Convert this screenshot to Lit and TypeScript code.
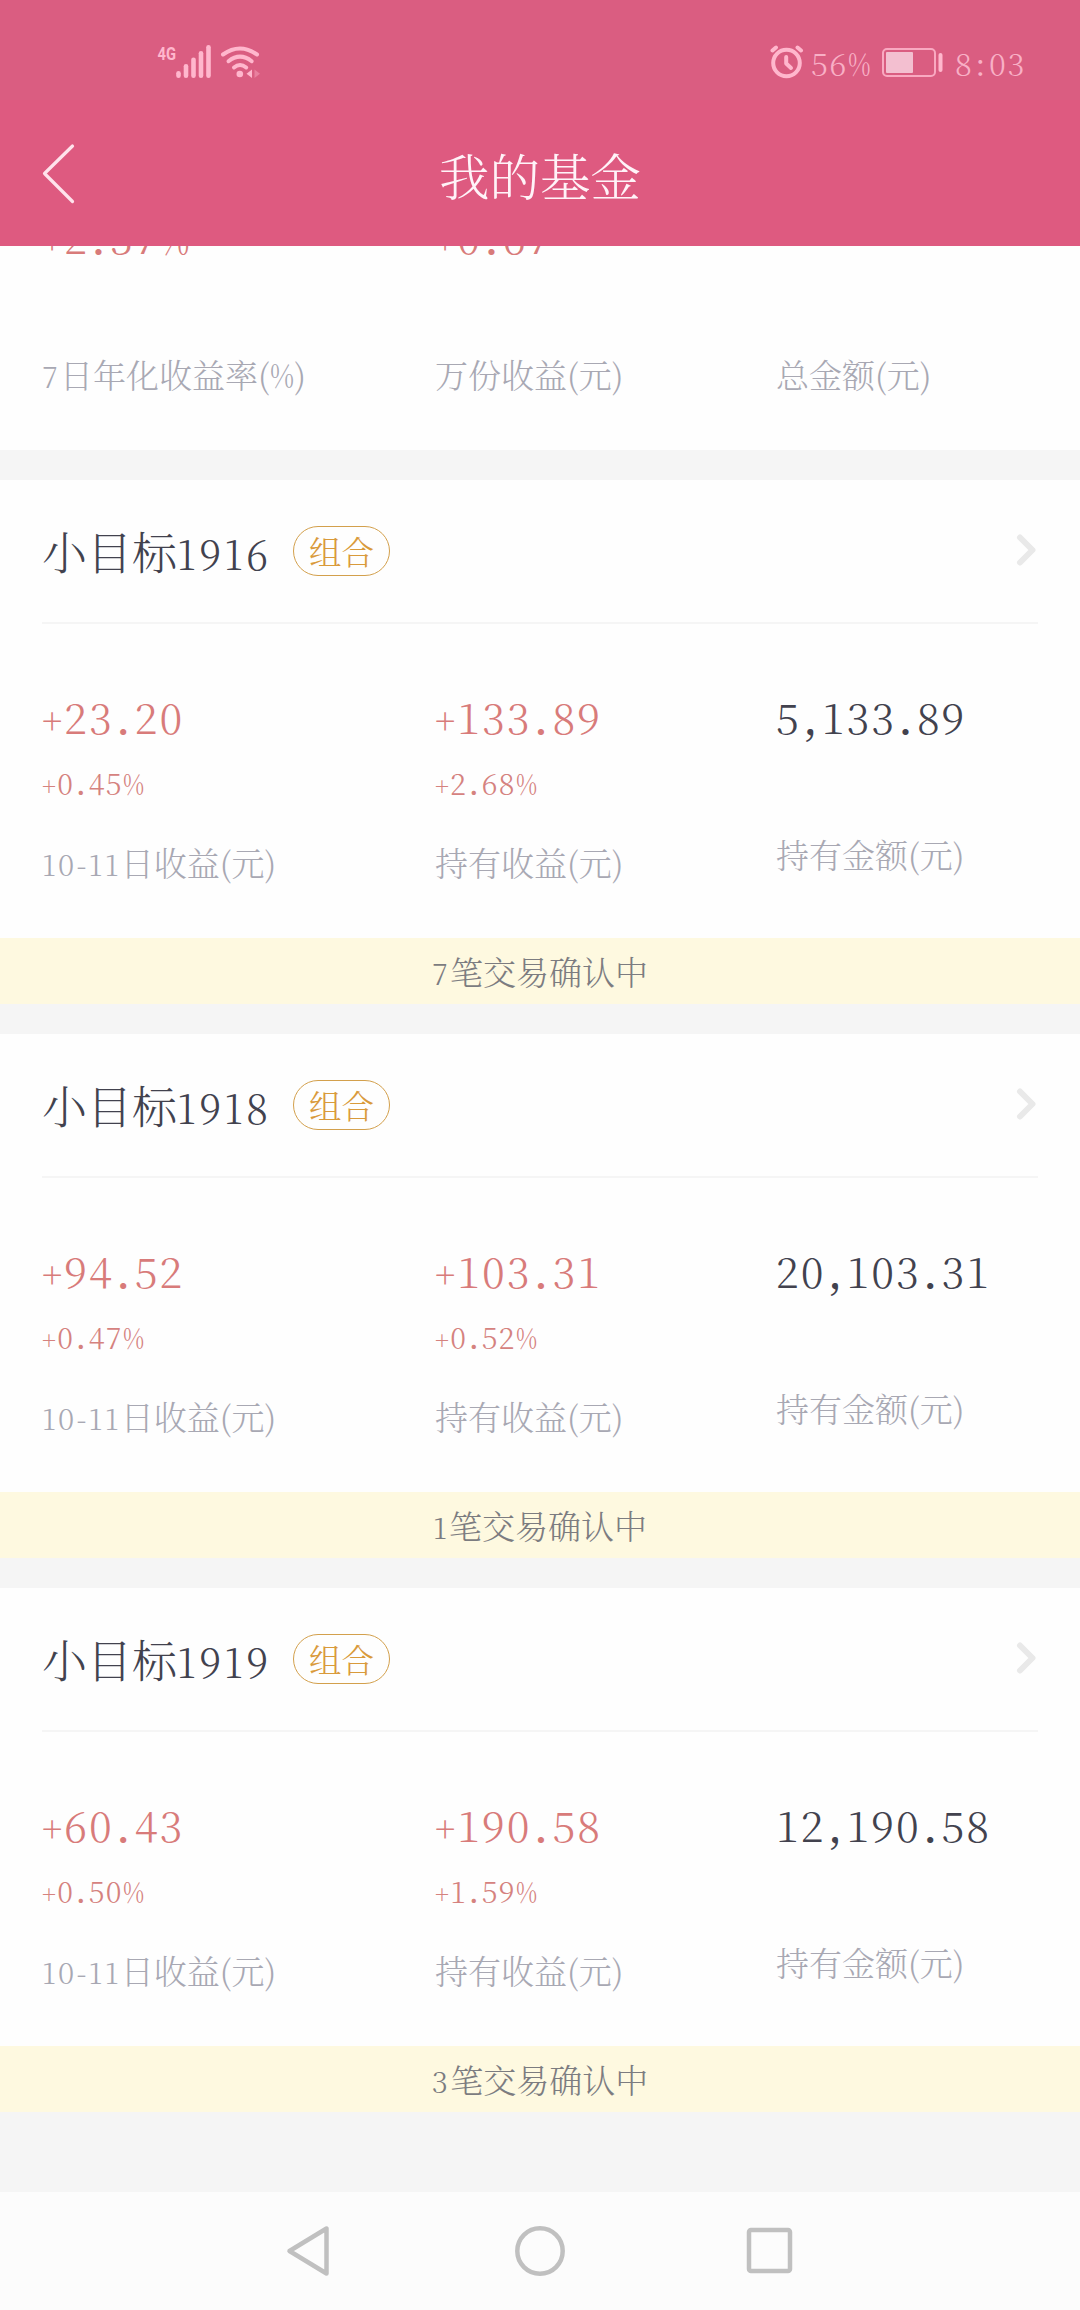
import { LitElement, html, css, svg } from "lit";
import { customElement, property } from "lit/decorators.js";

interface Fund {
  name: string;
  tag: string;
  day: string;
  dayRate: string;
  held: string;
  heldRate: string;
  amount: string;
  notice: string;
}

const FUNDS: Fund[] = [
  { name: "小目标1916", tag: "组合", day: "+23.20", dayRate: "+0.45%", held: "+133.89", heldRate: "+2.68%", amount: "5,133.89", notice: "7笔交易确认中" },
  { name: "小目标1918", tag: "组合", day: "+94.52", dayRate: "+0.47%", held: "+103.31", heldRate: "+0.52%", amount: "20,103.31", notice: "1笔交易确认中" },
  { name: "小目标1919", tag: "组合", day: "+60.43", dayRate: "+0.50%", held: "+190.58", heldRate: "+1.59%", amount: "12,190.58", notice: "3笔交易确认中" },
];

const MARK: Record<string, string> = { "+": "plus", "%": "pct", ".": "dot", ",": "dot", ":": "dot" };

/* Gives signs and separators their own widths next to the digits. */
const figures = (text: string) =>
  text.split(/([+%.,:])/).filter(Boolean).map((p) => (MARK[p] ? html`<span class=${MARK[p]}>${p}</span>` : p));

/* Sets digits a little smaller and wider than the Chinese text around them. */
const mixed = (text: string) =>
  text.split(/([\d-]+|%)/).filter(Boolean).map((p) =>
    p === "%" ? html`<span class="pct">${p}</span>` : /\d/.test(p) ? html`<span class="num">${p}</span>` : p
  );

const figureStyles = css`
  .plus { font-size: 0.84em; line-height: 0; }
  .pct { display: inline-block; width: 0.74em; transform: scaleX(0.8); transform-origin: 0 100%; }
  .dot { padding: 0 0.06em; font-weight: 600; }
  .num { font-size: 0.89em; line-height: 0; letter-spacing: 0.075em; }
`;

const typeStyles = css`
  :host {
    display: block;
    font-family: "Noto Serif CJK SC", "Liberation Serif", "Noto Sans CJK SC", serif;
    font-weight: 300;
  }
`;

@customElement("status-bar")
export class StatusBar extends LitElement {
  static styles = [
    typeStyles,
    figureStyles,
    css`
      .bar {
        box-sizing: border-box;
        height: 100px;
        padding: 42px 51px 0 156px;
        display: flex;
        align-items: flex-start;
        background: #da5d81;
        color: #f8b0c6;
      }
      svg { display: block; flex: none; margin-top: -2px; }
      .net { margin-right: auto; }
      .text { margin-top: -1px; font-size: 31px; line-height: 44px; letter-spacing: 1.7px; white-space: nowrap; }
      .power { width: 62px; margin-left: 7px; }
      .battery { margin-left: 8px; }
      .time { width: 74px; margin-left: 11px; }
      .dot { font-weight: 400; }
    `,
  ];
  render() {
    const bars = [71, 64, 57.5, 51, 45];
    return html`<div class="bar">
      <svg class="net" width="110" height="42" viewBox="156 40 110 42" fill="none" stroke="#ffb7cd" stroke-linecap="round">
        <text x="157.5" y="60" font-family="Roboto, sans-serif" font-size="19" font-weight="700" textLength="18.5" lengthAdjust="spacingAndGlyphs" fill="#ffb7cd" stroke="none">4G</text>
        ${bars.map((top, i) => svg`<path stroke-width="4.6" d=${`M${178.5 + i * 7.5} ${top + 2.3}V75.7`} />`)}
        <g stroke-width="4">
          <path d="M223 54.5Q239.8 42.5 257 54.5" />
          <path d="M228.500 61.200Q240 52 251.700 61.200" />
          <path d="M234 67.500Q240 62.500 246.200 67.500" />
        </g>
        <circle cx="239.800" cy="74" r="3.300" fill="#ffb7cd" stroke="none" />
        <path d="M252 69.500V78L246.500 73.800Z" fill="#ffb7cd" stroke="none" />
        <path d="M254.500 69.500V78L260 73.800Z" fill="#ffb7cd" opacity=".4" stroke="none" />
      </svg>
      <svg width="34" height="42" viewBox="771 40 34 42" fill="none" stroke="#ffb7cd" stroke-width="4" stroke-linecap="round">
        <circle cx="787.500" cy="63" r="13.300" />
        <path d="M787.200 57V63.500L792 68" stroke-linejoin="round" />
        <path d="M773.500 50.500L777 47.500M798.500 47.500L802 50.500" />
      </svg>
      <div class="text power">${figures("56%")}</div>
      <svg class="battery" width="63" height="42" viewBox="882 40 63 42" fill="none">
        <rect x="884" y="49" width="52" height="27" rx="4" stroke="#f9a9c1" stroke-width="2" />
        <rect x="887" y="52" width="27" height="21" rx="1" fill="#f3bfd0" />
        <rect x="939.500" y="53" width="4" height="19" rx="2" fill="#ffb7cd" />
      </svg>
      <div class="text time">${figures("8:03")}</div>
    </div>`;
  }
}

@customElement("title-bar")
export class TitleBar extends LitElement {
  static styles = [
    typeStyles,
    css`
      .bar {
        box-sizing: border-box;
        height: 146px;
        padding: 0 42px;
        display: grid;
        grid-template-columns: 40px 1fr 40px;
        align-items: center;
        background: #de5a80;
        color: #fff3f8;
      }
      svg { display: block; }
      .title { padding-top: 2px; text-align: center; font-size: 50.500px; line-height: 60px; }
    `,
  ];
  render() {
    return html`<div class="bar">
      <svg width="40" height="64" viewBox="42 141 40 64" fill="none" stroke="#ffe3ec" stroke-width="3.200" stroke-linecap="round" stroke-linejoin="round">
        <path d="M72.500 146L44.500 173.500L72.500 201.500" />
      </svg>
      <div class="title">我的基金</div>
    </div>`;
  }
}

const metricStyles = css`
  .metrics { display: grid; grid-template-columns: 393px 341px 1fr; padding-left: 42px; }
  .value { height: 50px; font-size: 42px; line-height: 46px; letter-spacing: 2px; color: #d87b7a; white-space: nowrap; }
  .rate { margin-top: 21px; height: 40px; font-size: 29px; line-height: 38px; letter-spacing: 1.300px; color: #d5827f; white-space: nowrap; }
  .label { margin-top: 36px; font-size: 33px; line-height: 44px; color: #a8a8b3; white-space: nowrap; }
  .total { color: #42424e; }
  .total + .label { margin-top: 89px; }
`;

@customElement("fund-card")
export class FundCard extends LitElement {
  static styles = [
    typeStyles,
    figureStyles,
    metricStyles,
    css`
      .card { height: 524px; display: flex; flex-direction: column; background: #fefefe; }
      .head {
        box-sizing: border-box;
        height: 144px;
        margin: 0 42px;
        display: flex;
        align-items: center;
        border-bottom: 2px solid #f5f5f5;
      }
      .name { width: 227px; font-size: 45px; line-height: 64px; white-space: nowrap; color: #42424e; }
      .tag {
        box-sizing: border-box;
        width: 97px;
        height: 50px;
        margin-left: 24px;
        border: 1.500px solid #d3a04c;
        border-radius: 25px;
        text-align: center;
        font-size: 32.500px;
        line-height: 48px;
        color: #d99a3b;
      }
      .arrow { display: block; margin: -3px 0 0 auto; }
      .metrics { flex: 1; padding-top: 69px; align-items: start; }
      .notice { height: 66px; background: #fef9e0; text-align: center; font-size: 33px; line-height: 65px; color: #7c7c80; }
    `,
  ];
  @property({ attribute: false }) fund!: Fund;
  render() {
    const f = this.fund;
    return html`<section class="card">
      <div class="head">
        <div class="name">${mixed(f.name)}</div>
        <div class="tag">${f.tag}</div>
        <svg class="arrow" width="22" height="34" viewBox="0 0 22 34" fill="none" stroke="#e9e9e9" stroke-width="6" stroke-linecap="round" stroke-linejoin="round">
          <path d="M4 4.500L16.500 17L4 29.500" />
        </svg>
      </div>
      <div class="metrics">
        <div>
          <div class="value">${figures(f.day)}</div>
          <div class="rate">${figures(f.dayRate)}</div>
          <div class="label">${mixed("10-11日收益(元)")}</div>
        </div>
        <div>
          <div class="value">${figures(f.held)}</div>
          <div class="rate">${figures(f.heldRate)}</div>
          <div class="label">持有收益(元)</div>
        </div>
        <div>
          <div class="value total">${figures(f.amount)}</div>
          <div class="label">持有金额(元)</div>
        </div>
      </div>
      <div class="notice">${mixed(f.notice)}</div>
    </section>`;
  }
}

@customElement("app-root")
export class AppRoot extends LitElement {
  static styles = [
    typeStyles,
    figureStyles,
    metricStyles,
    css`
      .page { width: 1080px; height: 2310px; display: flex; flex-direction: column; overflow: hidden; background: #f5f5f5; }
      .first { height: 204px; overflow: hidden; background: #fefefe; }
      .first .metrics { margin-top: -33px; }
      .first .label { margin-top: 89px; }
      .list { flex: 1; display: flex; flex-direction: column; gap: 30px; }
      .nav {
        height: 118px;
        display: grid;
        grid-template-columns: 1fr 458px 1fr;
        align-items: center;
        background: #fcfcfc;
      }
      .nav svg { display: block; margin: 0 auto; }
      .nav .back { margin-right: -20px; }
      .nav .recent { margin-left: -26px; }
    `,
  ];
  render() {
    return html`<main class="page">
      <status-bar></status-bar>
      <title-bar></title-bar>
      <div class="list">
        <section class="first">
          <div class="metrics">
            <div>
              <div class="value">${figures("+2.37%")}</div>
              <div class="label">${mixed("7日年化收益率(%)")}</div>
            </div>
            <div>
              <div class="value">${figures("+0.67")}</div>
              <div class="label">万份收益(元)</div>
            </div>
            <div>
              <div class="value total"></div>
              <div class="label">总金额(元)</div>
            </div>
          </div>
        </section>
        ${FUNDS.map((f) => html`<fund-card .fund=${f}></fund-card>`)}
      </div>
      <nav class="nav">
        <svg class="back" width="46" height="54" viewBox="0 0 46 54" fill="none" stroke="#c0c0c0" stroke-width="4.500" stroke-linejoin="round">
          <path d="M41.500 4.500V49.500L4.500 27Z" />
        </svg>
        <svg width="54" height="54" viewBox="0 0 54 54" fill="none" stroke="#c0c0c0" stroke-width="4.500"><circle cx="27" cy="27" r="22.700" /></svg>
        <svg class="recent" width="54" height="54" viewBox="0 0 54 54" fill="none" stroke="#c0c0c0" stroke-width="4.500"><rect x="6" y="6" width="41" height="41" rx="2" /></svg>
      </nav>
    </main>`;
  }
}
